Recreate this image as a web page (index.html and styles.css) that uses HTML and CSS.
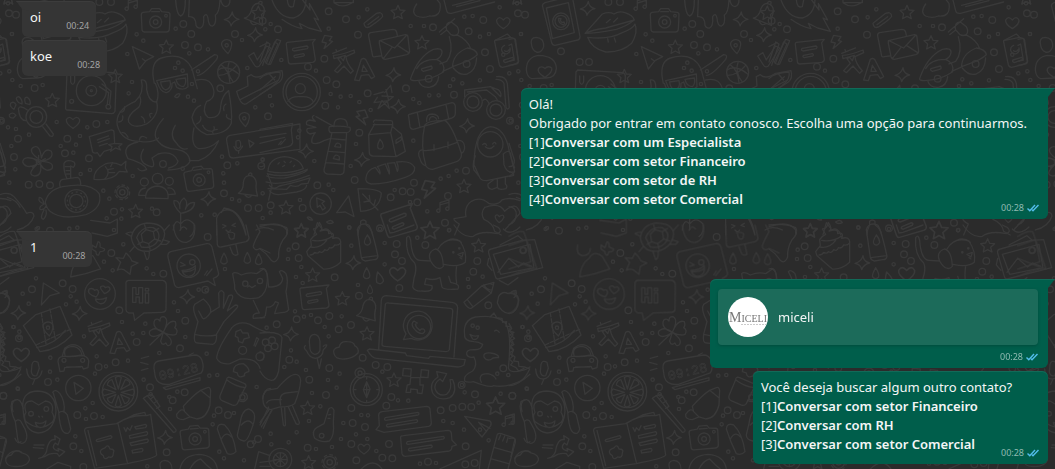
FILE: index.html
```html
<!DOCTYPE html>
<html lang="pt-BR">
<head>
<meta charset="utf-8">
<title>Conversa</title>
<link rel="stylesheet" href="styles.css">
</head>
<body>
<svg class="wallpaper" aria-hidden="true">
  <defs>
    <marker id="ring-s" viewBox="-8 -8 16 16" markerWidth="16" markerHeight="16" markerUnits="userSpaceOnUse"><circle class="ring" r="5"/></marker>
    <marker id="ring-m" viewBox="-14 -14 28 28" markerWidth="28" markerHeight="28" markerUnits="userSpaceOnUse"><circle class="ring" r="10"/></marker>
    <path id="star" d="M0-20L6-6L21-5L9 6L13 20L0 13L-13 20L-10 5L-21-5L-6-7Z"/>
    <path id="spark" d="M2-22Q4-4 22 0Q4 4-2 20Q-4 4-22 1Q-3-3 2-22Z"/>
    <path id="heart" d="M0 18Q-22 4-20-8Q-12-22 0-8Q12-22 20-8Q22 4 0 18Z"/>
    <path id="pin" d="M4 23Q-18 2-15-9Q-10-20 2-19Q17-16 15-3Q13 12 4 23ZM5-2a5 5 0 1 1-10 0a5 5 0 1 1 10 0"/>
    <path id="drop" d="M0-18Q-12 4-9 10Q0 20 9 10Q12 2 0-18Z"/>
    <path id="bolt" d="M-8-20L14-16L6-4L16-2L-10 20L-3 3L-16 0Z"/>
    <path id="note" d="M-12 14V-10L15-18V8M-12-3L15-11M-12 14a5 5 0 1 1-2-4M15 8a5 5 0 1 1-2-4"/>
    <g id="camera"><path d="M-38-25L-18-27L-12-36H12L18-27L38-25Q44-24 43-16L41 26Q40 34 32 34H-34Q-41 33-41 26L-43-16Q-44-24-38-25Z"/><circle r="18" cy="4"/><circle r="7" cy="4"/><circle r="4" cx="31" cy="-15"/><path d="M-12-27H12"/></g>
    <path id="bell" d="M-28 20Q-12 10-13-12Q-10-34 6-33Q24-32 26-10Q23 8 30 28ZM-8 25Q2 38 12 27M2-33Q4-44 12-40L13-32"/>
    <g id="letters"><path d="M-42-22L0-38M-30-26L-32-34M-40-16Q-18-16 22-32L24-24L-2-12Q0 10 20 30L12 38L-8 16L-28 36L-36 30L-16 8L-26-6L-18-10L-10 0L-4-16L-38-6Z"/><path d="M24 58L44-4Q52-10 58-2L84 48L74 54L66 42L44 44L38 60ZM50 14L46 32H62Z"/></g>
    <g id="letter-sheet"><path d="M-40-25L44-34L36-24L44 26Q44 34 36 35L-30 40Q-36 40-37 32L-43-18Q-44-24-40-25ZM-22-7L18-14Q25-12 20-6L-20 1Q-28-2-22-7ZM-18 14L8 9Q14 12 9 16L-16 21Q-24 18-18 14Z"/></g>
    <g id="tile">
      <g transform="scale(.3333)">
        <use href="#star" x="25" y="-8"/><use href="#star" x="499" y="140"/><use href="#star" x="346" y="228"/><use href="#star" x="157" y="300"/><use href="#star" x="407" y="633"/>
        <use href="#spark" x="695" y="58"/><use href="#spark" x="765" y="105"/><use href="#spark" x="625" y="597"/><use href="#spark" x="236" y="26"/>
        <use href="#note" x="397" y="12"/><use href="#heart" x="219" y="367"/><use href="#pin" x="680" y="138"/><use href="#pin" x="733" y="357"/>
        <use href="#camera" x="467" y="62"/><use href="#camera" transform="translate(597 536) rotate(-8)"/>
        <use href="#bell" transform="translate(765 42) rotate(14)"/><use href="#bell" x="743" y="560"/>
        <path d="M101 20Q98 12 108 8L170-8M190-10L213 110Q213 118 206 120L138 136Q130 136 128 128L101 20M112 24L178 8L196 98L130 116Z"/><circle cx="156" cy="64" r="25"/><circle cx="156" cy="64" r="18"/><path d="M149 55q-2 14 14 20q6-4 2-9l-6 2l-5-6l2-6Z"/>
        <path d="M228 100Q262 62 280 42Q300 34 315 42Q330 32 348 38Q372 46 376 60Q350 80 322 88Q262 100 228 100ZM228 100Q250 90 290 84L376 60M236 112Q300 120 340 98Q372 86 378 72Q388 96 368 130Q338 158 290 156Q248 146 236 112ZM292 68L304 58M314 66L326 54M296 116L298 126M316 114L320 126"/>
        <path d="M527 0Q530 45 542 48Q556 44 556 0M568 0L566 50Q588 48 588 76Q592 86 602 84Q613 80 611 50Q620 36 624 54Q626 80 638 78Q650 72 646 45Q658 40 660 0M663 0Q665 18 678 20Q690 16 690 0"/>
        <path d="M397 140L461 170L438 182L418 207ZM427 176L437 184"/>
        <path d="M52 210Q52 172 88 166Q142 168 142 206Q140 234 112 234L68 236Q54 232 52 210ZM108 232Q78 214 92 202Q102 198 108 206Q116 196 128 204Q132 216 108 232ZM68 136Q62 112 82 112Q106 114 104 140Q98 160 82 156Q70 150 68 136Z"/>
        <path d="M206 210L342 218Q350 222 349 230L345 334Q342 341 335 341L203 330Q196 330 197 322L201 216ZM212 228V244M224 228V244M212 246Q218 260 224 246M298 260L326 278L322 312M306 252L333 274L329 312"/><circle cx="274" cy="272" r="45"/><circle cx="274" cy="272" r="16"/><circle cx="274" cy="272" r="3"/><circle cx="325" cy="320" r="7"/><circle cx="215" cy="304" r="6"/>
        <circle cx="109" cy="351" r="31"/><circle cx="109" cy="351" r="19"/><path d="M128 380L150 408Q160 412 160 402L138 372M82 330Q60 314 55 326Q58 362 78 362M42 328Q28 320 32 310Q42 302 48 314ZM56 308Q42 292 56 290Q68 298 66 312ZM76 310Q70 290 82 292Q94 302 90 314ZM40 354Q26 354 28 344Q38 334 48 346Z"/>
        <path d="M463 250Q448 186 484 174Q550 154 576 206L592 266M470 242L562 222L564 260Q550 274 530 262L524 246L516 250Q518 270 500 278Q482 280 470 242ZM482 246L510 242Q516 264 498 270Q484 266 482 246ZM528 238L556 234Q560 252 550 260Q532 258 528 238Z"/>
        <path d="M424 240Q442 236 440 268Q446 306 470 306Q480 280 466 250M424 240Q434 278 406 304Q344 330 352 376Q364 424 420 424Q456 430 476 414M470 306Q480 344 440 372Q400 388 386 366Q380 346 416 322Q426 306 420 290M490 356Q450 402 476 426Q492 446 530 448Q568 454 570 484Q560 508 504 510M414 426Q362 436 384 476Q430 488 440 508Q422 518 414 506M430 448Q410 484 446 498Q470 508 456 474L474 462Q520 450 534 484Q530 498 506 504M574 210L644 164Q658 164 650 178Q610 226 592 226M590 240Q636 230 642 276Q642 298 620 304Q604 336 624 352Q662 358 662 318Q666 286 686 272Q698 336 694 370Q680 404 620 404Q580 386 576 352Q584 322 602 316M582 384Q570 436 596 446Q630 448 656 422Q636 468 596 482L568 482M608 376Q614 394 636 394Q646 390 642 380M526 376Q506 408 530 430Q544 452 562 446M524 290Q532 278 540 282Q534 298 524 290"/>
        <path d="M360 336Q374 338 374 320M356 366Q372 364 368 348M384 412Q376 396 366 398M418 420Q422 402 440 414M434 368Q434 354 424 350M452 352Q444 340 456 340M590 372Q606 364 602 350M640 402Q632 390 652 388M678 312Q668 318 672 332M692 358Q676 354 680 344"/>
        <circle cx="686" cy="217" r="33"/><path d="M663 194Q688 210 690 249M655 226Q686 226 710 196M688 184Q676 216 700 246M654 210Q680 192 716 222"/>
        <path d="M746 168L762 158L772 180L800 138L812 144L778 198Q770 204 764 196ZM710 274L744 258L742 230L754 224Q770 240 800 220L846 212Q852 236 838 246L738 312Q722 318 710 274ZM722 298L836 240"/><path d="M780 140L804 128M800 188L824 126L834 132L806 194"/>
        <path d="M680 422Q678 410 690 406L900 372V448L700 474Q690 474 688 466ZM708 424Q720 416 722 430L722 440Q714 450 708 440ZM702 440Q714 466 728 438M716 452V460M746 420L762 430L750 442Z"/>
        <path d="M268 410L334 390Q342 390 342 396L344 430L366 432L356 440L362 450L346 444L332 454L336 440L326 434L344 430M268 410L278 456Q284 462 292 458L300 470L312 454L332 448M292 420L326 408M294 428L328 416M298 438L322 430"/>
        <circle cx="116" cy="486" r="7"/><path d="M112 474Q84 452 100 442Q120 432 124 474Q136 440 154 454Q164 476 126 484Q164 486 156 506Q138 520 122 494Q126 528 104 528Q78 524 110 494Q76 508 68 486Q70 464 112 480M116 486V466M116 486L136 476M116 486L130 506M116 486L98 502M116 486L96 474"/>
        <path d="M282 538Q280 510 316 492Q338 484 364 496L378 484L376 504L382 516L358 514Q338 544 282 538ZM316 500Q334 518 314 538M338 488L332 500M326 508L340 506M328 518L344 518"/>
        <path d="M192 490Q200 476 222 486Q228 494 220 502L212 498V532M192 490Q190 512 200 534M196 500H210M198 512H212M200 522H212M180 560Q176 542 188 538L232 532Q242 534 242 554M136 606Q144 570 188 560Q272 544 298 582Q308 624 258 644Q184 662 150 634Q138 622 136 606ZM136 612Q112 608 118 592Q128 592 132 612Q116 620 120 628Q132 632 138 618M132 630Q118 656 130 658Q142 648 138 630"/><circle cx="229" cy="603" r="34"/><circle cx="229" cy="603" r="20"/><circle cx="229" cy="603" r="27" stroke-dasharray="3 11"/>
        <circle cx="367" cy="577" r="17"/><circle cx="367" cy="577" r="8"/><circle cx="367" cy="577" r="22" stroke-dasharray="8 9"/>
        <circle cx="473" cy="536" r="16"/><circle cx="433" cy="546" r="12"/><circle cx="508" cy="544" r="12"/><path d="M437 594Q436 562 472 558Q508 562 504 596ZM434 586H416Q418 566 436 564M506 584L526 582Q522 562 504 564"/>
        <path d="M0 584Q26 574 42 590Q70 622 80 640Q100 632 102 648Q92 680 52 690M0 620Q22 622 22 644Q20 668 0 674M22 592Q50 600 60 622M0 430L16 480Q18 500 0 500M0 514Q16 520 14 526L0 530M0 118Q20 112 20 122L28 184Q26 192 0 196M0 136L8 132L16 180L0 184"/>
        <path d="M542 640Q518 616 522 602Q540 600 540 626Q536 606 552 594Q566 606 556 628Q566 604 584 608Q582 634 542 640ZM542 640V690M542 672Q524 652 520 690M544 670Q560 648 582 672Q586 700 570 710"/>
        <path d="M650 705V654Q656 636 676 630Q714 622 738 705M664 638L672 624Q726 630 738 705M668 674L678 678L668 684M706 670L696 676L706 680M678 690Q686 700 692 690M768 690Q790 676 820 690M802 520L816 556L806 600"/>
        <polyline class="small" points="36,102 24,10 430,122 382,162 410,103 527,86 535,188 525,204 568,160 624,148 548,212 576,252 564,290 582,302 594,214 396,246 386,280 128,255 62,258 28,214 37,240 24,382 48,387 87,404 34,438 46,508 28,548 182,438 220,458 228,434 240,408 262,382 322,366 170,366 242,522 270,510 310,572 328,596 366,628 364,656 456,626 398,528 548,506 604,646 644,644 696,597 672,548 670,520 666,470 712,490 742,204 726,120 766,322 718,602 788,478 788,580 114,684 208,686 320,655 342,690 5,362"/>
        <polyline class="medium" points="298,6 333,6 550,72 574,102 705,102 555,135 594,142 661,265 104,264 54,416 202,416 289,372 42,471 195,460 267,475 86,554 118,552 150,556 342,635 470,637 489,492 672,580 682,496 744,624 776,624 212,186 156,154 48,44 240,186 788,62 150,692"/>
      </g>
      <g transform="translate(260 0) scale(.3333)">
        <path d="M36 0Q56 54 100 54Q136 44 138 0M82 0Q84 26 100 20L104 0M128 0L150 30L148 10L176 60L162 54L184 94L146 84L118 70L126 86Q96 80 66 58M222 8Q248 28 280 6M222 0V8H280V0M470 12Q452 38 470 48Q490 56 508 48Q546 52 540 10L532 0M552 0L560 32Q562 42 574 40L704 6M578 16L664-6M590 20L660 2"/>
        <use href="#star" x="414" y="36"/><use href="#star" x="486" y="127"/><use href="#star" x="612" y="558"/><use href="#star" x="78" y="622"/><use href="#star" x="124" y="690"/><use href="#star" transform="translate(510 690) scale(1.3)"/><use href="#star" x="772" y="-8"/><use href="#star" x="-5" y="38"/>
        <use href="#spark" x="400" y="225"/><use href="#spark" x="414" y="320"/><use href="#spark" x="621" y="378"/><use href="#spark" x="306" y="479"/><use href="#spark" x="138" y="454"/>
        <use href="#heart" x="730" y="68"/><use href="#bolt" x="202" y="126"/><use href="#bolt" transform="translate(506 568) scale(1.3)"/><use href="#bolt" transform="translate(306 352) scale(-1.1 1.1)"/><use href="#note" x="552" y="618"/>
        <use href="#letters" transform="translate(260 182)"/><use href="#letter-sheet" x="122" y="152"/><use href="#letter-sheet" transform="translate(416 660) rotate(-12) scale(1.15)"/>
        <path d="M312 70L350 40Q366 34 368 48Q368 54 330 80Q314 88 312 70M324 74L356 50"/>
        <path d="M326 108Q324 100 332 98L398 88Q408 88 410 96L412 106M326 108L338 168Q340 172 346 170L362 168M358 122L436 104Q444 104 444 112L449 154Q448 162 440 164L376 178Q368 178 366 170L358 130ZM360 122L404 144L440 106M370 176L396 142M446 158L412 136"/>
        <path d="M538 96L584 56M542 104L560 90M560 90Q554 68 574 66L592 80Q600 94 592 104Q576 112 566 96ZM568 110Q582 156 560 184L540 192M590 104Q624 120 632 146M452 236Q474 170 520 148Q548 142 546 158Q544 172 530 178Q558 190 550 216Q516 240 466 242Q450 242 452 236ZM470 206Q484 178 530 178M486 206L514 198Q520 206 512 208L490 214Q482 210 486 206M578 200Q578 162 622 144Q650 148 652 164Q638 178 604 190ZM548 214L580 200"/><path d="M476 242Q482 264 508 262Q534 258 536 230M580 204Q598 228 622 222Q648 212 650 174"/><circle cx="620" cy="192" r="10"/><circle cx="506" cy="236" r="10"/>
        <path d="M704 122L742 102L752 112L764 116L776 184Q774 192 768 192L728 202Q720 202 718 194L704 126ZM704 122L752 112M734 136A13 13 0 1 0 750 144M734 152Q742 158 748 148M732 180L758 172Q764 176 758 180L736 188Q728 184 732 180"/>
        <path d="M0 186L20 126L30 132L8 196M16 186L50 118L62 122L32 192Q20 196 16 186M0 236Q16 218 60 216Q66 236 38 258L0 284M0 270L46 230M28 222L44 240"/>
        <circle cx="125" cy="276" r="56"/><circle cx="125" cy="276" r="47"/><circle cx="121" cy="266" r="15"/><path d="M84 304Q92 288 122 290Q154 288 160 306"/>
        <path d="M374 278L392 256L396 278M378 268L386 302L342 308L352 292M366 288L400 290L354 326L366 302L388 326L382 304M370 276L342 284"/>
        <path d="M614 270L692 260L722 290Q726 280 716 270L690 260M614 270V290M622 276L680 270L706 290L712 300M710 230Q736 226 742 250L748 322Q744 332 738 322L732 250Q726 238 708 238M668 302Q678 290 688 312"/><circle cx="639" cy="306" r="28"/><circle cx="639" cy="306" r="18"/><circle cx="708" cy="330" r="28"/><circle cx="708" cy="330" r="18"/>
        <path d="M0 388L98 370L94 390L98 428Q94 438 84 440L0 458M0 412L78 400M0 430L74 412M56 434L64 424M62 434L76 418"/>
        <path d="M168 350L222 380M162 346Q150 350 166 364L150 360Q136 362 140 374L168 382L142 386Q136 396 150 402L166 398Q152 416 156 428Q168 436 192 422L210 416M222 376Q222 356 242 356Q262 356 262 376M208 380Q204 394 212 398H260Q274 396 270 382Q236 376 208 380M216 398L192 510Q192 520 202 522L242 524Q252 522 252 514L260 398M214 416L258 420M206 454L256 458M198 488L252 492M224 440Q230 422 242 434V442ZM220 476Q226 458 238 470V480Z"/>
        <path d="M340 366Q342 358 350 360L390 362Q398 360 398 370V380L424 402L436 454L408 470L338 468Q328 466 328 458L326 404L344 372M326 404L392 398L398 374L340 374M392 398L408 470M408 420L424 410V420L408 430ZM360 418Q348 440 356 446Q368 450 370 438Q368 426 360 418"/>
        <path d="M446 350Q442 344 452 342L576 308Q584 308 586 318V340Q586 350 576 354L460 388Q452 388 450 380ZM472 338L480 382M558 314L566 356M500 364Q498 342 516 342Q536 344 536 356M508 360Q510 348 520 350Q528 352 530 358M494 376Q504 360 556 362Q578 378 604 460Q606 476 592 484L518 508Q504 508 498 498Q480 440 494 376M484 450Q510 458 590 428M522 434V452M564 426V444M484 450Q470 456 480 476Q484 494 498 498M590 422Q612 418 614 440Q614 456 604 460"/>
        <path d="M0 500Q12 500 12 494M24 514Q26 474 74 470Q120 474 130 506Q80 526 24 514ZM24 522Q80 536 142 508Q142 520 74 534Q36 536 20 528M18 546Q60 560 148 526M28 556Q40 572 58 558Q90 552 150 534L144 550L124 552Q110 564 92 556L80 568L24 566M28 572Q38 584 56 584L110 576Q138 570 140 556M54 492L58 488M72 484L76 488M90 488L94 484M68 500L74 496M100 500L104 496"/>
        <path d="M318 534Q320 510 346 502L360 522Q362 512 352 500L376 492L388 522Q390 510 382 490L404 488L412 514Q418 504 410 486Q452 480 464 502Q466 522 436 532Q380 552 334 552Q314 548 318 534Z"/>
        <circle cx="691" cy="433" r="38"/><path d="M642 494Q644 386 692 380Q736 384 748 454L764 514Q760 524 748 528L680 542Q664 542 660 534L642 494ZM646 468Q636 492 642 510L658 530M730 462Q752 442 754 474L764 504M730 462L732 494Q740 520 760 516M668 434Q676 426 680 436M698 432Q704 422 708 432M676 440Q690 452 702 438M700 540L684 552Q682 566 696 568L712 562V538M712 562Q716 572 738 566Q744 558 736 552V534"/>
        <circle cx="182" cy="611" r="32"/><path d="M170 594L194 604L186 610L196 624L188 630L180 616L172 622ZM230 638L266 588L282 650L256 636Z"/>
        <path d="M294 566Q356 566 364 580Q360 632 302 634Q298 600 294 566ZM308 582L354 630M330 602L328 586M330 602L312 606M342 616L346 600"/>
        <path d="M584 705L598 672Q580 662 582 656L618 650Q612 620 634 604Q662 588 686 610Q714 618 726 600Q750 590 780 602M674 622Q660 640 672 658Q700 670 704 694L724 705M674 622Q720 606 734 634Q770 600 780 640L736 688M706 648Q712 640 718 650Q730 640 732 652Q726 664 718 668Q704 656 706 648M0 680Q60 660 80 690V705M294 705Q294 690 302 674V664Q310 656 318 664V674Q336 688 338 705M162 705L172 668L188 690Q206 680 216 705M142 652Q150 648 158 660Q146 662 142 652M200 666Q214 656 220 668Q206 674 200 666"/>
        <polyline class="small" points="322,28 296,52 206,86 32,72 16,88 452,78 492,78 613,50 638,48 719,22 687,102 660,110 783,102 64,180 168,212 212,282 242,290 234,322 272,288 298,306 332,330 36,316 118,392 114,412 163,483 272,498 288,432 460,422 460,297 478,309 508,286 536,286 580,238 570,258 607,250 660,241 748,220 730,164 542,536 566,528 590,512 404,570 450,606 502,634 120,600 32,638 206,554 220,570 8,480 8,654 268,682 568,690 30,288"/>
        <polyline class="medium" points="206,34 258,58 54,88 294,104 519,82 626,94 670,60 193,176 144,200 200,240 229,253 323,280 438,265 196,317 24,349 298,398 582,284 690,207 675,157 774,40 750,362 172,556 284,540 428,574 452,576 462,548 392,592 472,607 128,624 618,512 564,588 360,685 555,668 32,616 4,498"/>
      </g>
      <g transform="translate(0 225) scale(.3333)">
        <path d="M272-14L330-6L352-18V24L322 34L276 24M0 34Q26 16 44 20L84 132Q60 128 0 154M0 62L52 44L66 110L0 132M0 100L64 126M0 204Q20 206 28 222Q30 246 8 262L0 264M8 204Q14 194 20 202L14 208"/><circle cx="42" cy="76" r="9"/>
        <path d="M394 38Q400 0 440-6Q490-6 494 26Q490 66 448 78Q402 84 394 38ZM410 38Q424 2 460 8Q484 22 474 46Q460 72 424 66ZM424 28L438 14L460 20L464 42L446 56L428 50ZM438 14L434 0M460 20L476 10M464 42L482 48M446 56L450 72M428 50L414 58M394 34L378 26Q388 20 396 22M492 18L508 0M488 44L508 50L500 58L482 58M432 80L440 104Q448 104 448 80M402 66L390 80"/>
        <path d="M520 0Q526 56 560 52Q588 44 584 0M540 16Q548-2 560 12M650 0L652 58Q654 68 664 66L738 50Q750 44 746 34L738 0M690 66L698 86Q704 94 714 88L708 60M682 24Q694 18 704 26M686 28Q688 48 702 40L704 28M770 0L780 20Q758 60 760 66Q766 80 780 70L810 84"/>
        <path d="M504 96Q502 84 512 80L620 56Q632 54 636 66L656 146Q656 154 640 160L646 182L624 168L536 188Q528 188 524 180ZM614 150L622 138M620 152L636 132"/><circle cx="566" cy="122" r="35"/><circle cx="577" cy="112" r="8"/><path d="M542 112L556 120L542 124M546 136Q572 136 586 122Q590 152 566 154Q550 152 546 136ZM550 140Q572 142 586 130"/>
        <path d="M276 60L288 68L294 50Q302 50 300 66L314 72Q314 80 300 80L296 90Q288 92 288 80L276 72ZM378 84Q392 96 396 108L414 114L394 124L390 148L372 134Q360 130 352 136L362 112L348 98L370 100ZM240 100Q256 74 280 94L302 132Q260 148 212 156Q216 116 240 100M206 60Q200 90 222 92Q244 90 244 70"/>
        <path d="M130 174L178 204L150 212L124 240ZM378 178Q376 168 386 166L488 166Q498 168 499 178L498 254Q496 262 486 262L432 264L404 286L400 264H386Q378 260 378 254ZM398 188H408V208H416V188H428V234H418V216H408V232H398ZM436 204H446V234H436ZM436 190H446V198H436Z"/>
        <circle cx="300" cy="207" r="46"/><path d="M288 216Q258 206 268 192Q278 188 284 196Q294 190 296 202Q294 210 288 216ZM314 206Q296 188 304 184Q312 180 316 188Q328 182 330 192Q328 200 314 206ZM286 222Q304 226 320 218Q316 238 300 236Q288 232 286 222"/>
        <use href="#spark" x="55" y="264"/><use href="#spark" x="239" y="266"/><use href="#spark" x="562" y="216"/><use href="#spark" x="495" y="638"/><use href="#drop" x="672" y="102"/><use href="#drop" x="742" y="100"/><use href="#drop" x="776" y="104"/>
        <use href="#letters" transform="translate(306 326)"/><use href="#heart" transform="translate(64 388) scale(1.2)"/><use href="#camera" transform="translate(585 638) rotate(-5)"/>
        <path d="M124 264L138 356M150 252L166 342M108 360L214 312" stroke-dasharray="12 5"/><path d="M70 302L106 270L180 244L216 330Q172 376 120 380ZM110 368Q168 356 196 316"/><use href="#pin" x="144" y="310"/>
        <path d="M490 322Q454 308 464 286Q472 278 480 288Q480 272 494 276Q508 286 490 322Q506 282 526 290Q530 302 524 308Q536 316 528 328Q514 334 490 322Q524 346 510 360Q502 366 498 354Q486 364 482 348L490 322Q462 342 450 330Q444 318 456 314Q468 306 490 322L450 360"/>
        <path d="M584 328L594 290Q574 250 584 238L610 222Q636 244 632 262Q616 286 608 280L596 258M632 262L658 246L656 204Q664 190 672 204L670 250L686 212Q700 206 698 218L682 258L706 240Q718 240 710 250L672 290L648 330M584 328Q580 354 592 354L638 358Q650 356 650 330Q616 336 584 328"/>
        <path d="M704 180L698 146Q704 138 724 150Q748 140 770 146L790 132Q804 136 802 168Q800 206 776 218Q720 230 704 192ZM760 226L778 264Q756 264 760 280L794 278M742 186L748 182L756 188L766 182"/><circle cx="736" cy="176" r="8"/><circle cx="780" cy="168" r="8"/>
        <path d="M650 400Q652 370 696 308Q716 286 750 298Q790 322 810 322M650 400Q660 420 690 416L720 402Q770 398 780 430M708 320L722 314L728 324H744L748 338L732 342L728 354L716 350L714 338L706 334ZM762 362L770 338L776 342L766 364M700 440Q700 416 730 416Q750 430 746 440Q730 444 734 452Q714 462 712 444Z"/><circle cx="728" cy="376" r="12"/><circle cx="780" cy="395" r="12"/>
        <path d="M186 396L194 370Q220 348 244 370L254 394M196 394Q186 366 220 364Q242 368 246 390Q220 396 196 394M174 410Q174 394 190 394L250 392Q268 398 266 412L264 428L250 432L246 424L194 428L192 438L180 440ZM200 426H242"/><circle cx="192" cy="406" r="6"/><circle cx="248" cy="406" r="6"/>
        <path d="M96 418Q100 404 114 412L118 430L110 452Q96 456 94 440ZM80 432Q82 464 104 462Q122 460 126 438M104 464L98 478M0 296L8 310L2 318L12 330L4 340L12 352L4 364L14 374L8 388L18 396L14 408L28 410L30 424L46 426L62 432Q40 480 0 482"/>
        <circle cx="235" cy="489" r="38"/><path d="M222 472L250 490L228 508Z"/><circle cx="355" cy="500" r="58"/><circle cx="355" cy="500" r="48"/><path d="M355 492L346 458Q356 450 364 458ZM362 494L376 464Q390 466 390 478ZM364 502L400 492Q408 502 398 512ZM362 508L388 520Q386 534 374 536ZM355 512L364 540Q356 550 346 542ZM348 508L336 534Q324 532 322 520ZM346 502L312 512Q302 502 312 492ZM348 494L322 480Q324 466 336 464Z"/>
        <path d="M462 430Q460 412 476 408L584 390Q600 390 606 406Q614 430 604 444L508 478Q474 482 466 456ZM490 488L600 458V466L498 494ZM424 400L446 394M422 412L444 418M424 436L444 430M568 390L580 384"/><text class="digits" transform="translate(480 466) rotate(-13)">09:28</text>
        <path d="M430 520L442 512L528 614Q530 622 520 622ZM442 512L456 508L480 544L470 550M452 522L462 514M462 534L472 528M530 568Q546 546 554 560L550 544Q580 510 602 496L622 488Q630 484 632 496L630 540Q620 580 590 582L570 576L550 584Q528 584 530 568ZM602 496L630 518M554 560L570 576M680 464Q680 454 692 458L734 476Q742 482 734 490L712 536Q706 544 696 540L668 528Q658 524 660 512ZM680 464Q704 484 736 488M726 504Q744 502 742 520Q732 536 716 526"/><circle cx="727" cy="517" r="8"/>
        <path d="M70 560Q60 500 112 498Q168 500 168 560Q162 622 114 624Q74 620 70 560ZM78 562Q66 528 96 528L116 540L136 528Q164 532 156 562Q168 580 156 592Q120 624 76 588Q70 572 78 562M106 592Q124 600 138 588Q136 608 120 608Q108 604 106 592M116 574L118 576M126 574L128 576M46 590Q28 552 36 530Q56 516 64 534L70 550M46 590L54 648Q62 660 74 652Q86 640 76 614L62 588Q52 580 46 590M158 502Q166 490 180 506Q196 530 192 560M160 504L176 560Q180 614 192 622Q208 632 212 612L202 570Q190 552 176 564"/><circle cx="93" cy="566" r="7"/><circle cx="139" cy="552" r="7"/>
        <path d="M254 618Q252 610 262 608L350 596Q392 568 440 572L452 568L470 690Q468 700 382 716L284 730L254 618ZM264 616L290 722M354 596L382 712M350 596L400 570L434 562L438 572M290 644L332 632Q340 636 332 640L294 650Q286 648 290 644M372 608L378 620L382 608L390 616L396 602M404 606L436 598Q444 602 436 608L408 612ZM388 632L440 620Q446 624 440 630L390 640ZM390 654L442 642Q448 646 442 652L394 662ZM396 676L426 670Q432 674 426 680L398 684ZM316 668Q324 656 330 672Q346 672 340 684Q340 700 326 696Q312 708 310 692Q296 684 304 674Z"/>
        <path d="M116 700Q140 696 142 666Q150 640 166 644L164 632L180 642L174 660L166 654Q150 672 176 678L174 670L194 680L178 694L172 686Q150 682 136 694ZM102 660H132M100 668L130 670M18 710Q14 694 34 690Q46 668 66 684Q90 690 88 706Q80 728 40 724Q22 724 18 710ZM0 572L12 568V596L0 598M0 640Q24 636 16 650L6 694M140 732L174 712L212 724V732M540 732Q548 690 598 688Q646 692 652 732M570 732Q584 706 602 702Q618 720 634 732"/>
        <path d="M652 612Q654 592 674 600Q700 624 708 680Q698 692 682 686Q664 650 652 612ZM664 642Q680 616 694 636M720 596Q726 554 746 552Q770 560 762 590Q744 650 732 648Q712 644 712 630ZM724 600Q746 576 760 600M780 600L806 546M790 610L812 560M788 520Q792 490 812 490M764 732L776 680L810 692M482 732Q474 708 494 706Q516 708 516 732"/>
        <polyline class="small" points="370,58 338,136 312,110 440,130 460,147 675,132 108,160 68,206 86,236 198,238 212,214 230,230 366,291 436,296 398,326 430,324 252,334 290,394 285,446 318,424 384,407 151,398 172,464 150,440 40,306 58,320 58,338 478,384 522,232 534,258 596,194 620,196 556,336 431,464 452,508 532,500 510,552 508,516 628,452 652,450 620,386 770,486 762,652 732,706 672,700 658,680 638,598 642,572 226,634 244,678 256,550 278,534 258,582 308,576 54,492 702,564 110,12 232,8 442,724 800,308"/>
        <polyline class="medium" points="96,193 188,175 218,192 358,256 556,287 410,351 540,370 347,412 296,426 144,471 450,487 554,502 10,512 282,573 232,570 220,664 500,682 490,146 334,84 623,36 684,570 656,556 774,642 752,658 518,526 250,726 616,194"/>
      </g>
      <g transform="translate(260 225) scale(.3333)">
        <path d="M0 0Q44-6 80 8Q90 24 68 46Q54 70 56 96Q44 124 28 98Q18 84 0 72M0 132Q18 124 22 150L26 186Q66 186 68 160L58 140Q66 132 78 146Q86 164 78 200L86 254Q80 264 70 262L44 266Q50 244 56 234L46 230Q38 248 20 246L16 272Q10 280 0 278"/>
        <path d="M144 92L140 80L154 62L152 44Q160 32 170 28L160 12Q174 12 178-8Q192 12 180 18Q210 10 206 26Q226 20 218 40Q240 34 242 50L242 112Q218 134 190 132ZM152 66Q180 72 200 46M158 46Q190 52 216 34M150 90Q160 90 164 82Q174 88 178 80Q188 86 194 74Q204 80 208 68Q218 72 224 60Q236 62 242 54"/>
        <path d="M292 14Q300-10 326 0Q336 12 354 94Q352 104 342 104L316 108Q306 106 304 98ZM306 98L352 92M322 30Q308 52 316 58Q326 64 332 52Q332 42 322 30M382 0L390 24L402 22L462 0M582 0Q608 40 640 34Q662 16 712 26Q728 20 716 8L700 0M730 12Q750 34 780 6"/>
        <use href="#star" x="124" y="17"/><use href="#star" x="656" y="61"/><use href="#star" x="158" y="149"/><use href="#star" x="247" y="220"/><use href="#star" x="321" y="325"/><use href="#star" x="402" y="464"/><use href="#star" x="143" y="548"/><use href="#star" x="146" y="712"/><use href="#star" transform="translate(707 542) scale(1.3)"/>
        <use href="#spark" x="280" y="114"/><use href="#spark" x="93" y="328"/><use href="#drop" x="320" y="146"/><use href="#drop" transform="translate(358 160) rotate(-15) scale(1.1)"/><use href="#drop" transform="translate(330 194) scale(.8)"/>
        <use href="#heart" transform="translate(413 146) scale(1.2)"/><use href="#heart" transform="translate(312 671) scale(.9)"/><use href="#note" x="748" y="585"/><use href="#letter-sheet" x="163" y="214"/><use href="#bell" transform="translate(320 256) rotate(8)"/>
        <path d="M440 38Q448 26 452 46Q456 104 480 106L512 108M440 38Q436 90 464 114Q472 130 462 160L458 186Q464 200 486 198Q522 202 516 182L494 178L498 160Q520 168 540 158L546 186Q552 196 594 192Q600 180 586 176L572 172L566 154M590 122Q586 152 590 174M512 108Q500 82 526 72Q548 76 550 124Q538 138 522 122Q516 116 512 108M534 72Q556 34 600 48Q622 82 616 112Q598 128 552 118M564 46Q584 36 604 52M594 88L610 82L606 96ZM600 98L606 102"/><circle cx="580" cy="82" r="2"/><circle cx="598" cy="70" r="2"/>
        <path d="M686 84Q684 74 694 72L786 46L824 44L848 128L714 162Q708 162 706 154ZM700 88L810 58L822 128L722 148ZM714 142L746 100L776 126L790 114L816 124M720 60L774 32L790 46M718 166L744 180L774 158M686 100L682 120L696 136"/><circle cx="790" cy="76" r="9"/>
        <path d="M612 232L666 182L702 172L694 204L634 250Q624 252 612 232ZM666 182L694 204M672 178Q676 192 696 196M624 226L638 244M690 176L700 180M716 214Q728 196 744 206Q774 200 776 226Q774 262 748 266Q724 264 712 234ZM750 206Q756 196 768 196Q772 210 762 218"/>
        <path d="M356 374L364 226Q366 212 380 212L576 232Q592 234 593 248L582 396M366 358L376 238Q378 232 386 234L572 250Q580 252 578 262L568 374Q566 380 558 380L374 364Q366 364 366 358M322 376L328 372L436 384L440 392L506 400L510 394L616 404L612 420Q604 426 594 426L350 400Q336 400 322 376Z"/><path d="M438 326A43 43 0 1 1 454 340L430 344Z"/><circle cx="477" cy="306" r="35"/><path d="M462 288Q452 296 460 308Q472 326 488 326Q500 318 490 312L484 312L480 316Q468 308 466 298L472 294Z"/>
        <path d="M614 330Q608 286 646 276Q706 268 734 292Q756 316 746 420Q742 438 760 440Q790 440 810 426M614 330Q612 348 642 350Q656 350 668 358Q664 376 640 374Q618 374 620 388Q624 400 642 396Q654 420 638 438Q608 452 614 468Q622 474 640 470M640 470Q690 490 700 482Q742 490 790 464L810 448M664 472Q652 446 684 446Q702 450 708 462M672 396Q668 382 692 384Q718 388 716 398Q700 396 692 404Q678 408 672 396M630 328Q640 336 656 332Q650 348 638 342ZM704 318Q710 312 718 322M690 276L702 264L710 278L726 280L728 292L740 290L738 304L752 304L748 318L762 322L750 330L764 340L750 348L762 358L750 366L760 376L748 384L758 394L748 402L758 412L752 420L768 428L776 438L792 430"/>
        <path d="M148 350Q148 328 164 328Q178 330 180 350V376Q176 388 164 388Q152 384 150 372ZM136 362Q128 368 140 378Q148 398 166 400Q188 398 190 374Q200 366 200 360Q194 358 190 364M172 402L178 430L184 402M222 386Q216 370 238 366Q240 348 262 350Q282 350 284 362Q298 370 294 384Q280 400 254 402Q226 404 222 386ZM0 324Q60 318 66 338L56 438Q48 468 34 466Q14 464 0 438M0 380Q14 384 12 394Q10 406 0 406"/>
        <circle cx="319" cy="494" r="48"/><circle cx="319" cy="494" r="39"/><circle cx="300" cy="444" r="15"/><circle cx="300" cy="444" r="6"/><path d="M320 470L330 492L320 518L310 494ZM310 494H330M320 470V518M320 455V462M320 532V526M358 494H350M280 494H288"/>
        <path d="M430 430L454 432L452 454L428 452ZM484 434L506 436L504 458L482 456ZM452 458L480 458V480H490L486 506L472 504V494L452 492V502L438 502L442 480L450 478ZM530 440L560 446L548 470L540 462Q520 476 526 494Q536 516 560 508Q578 492 570 464L578 464Q594 500 570 518Q534 530 518 504Q506 474 534 456Z"/>
        <path d="M10 534Q4 512 20 496L52 490Q88 448 106 448Q120 448 122 466Q120 498 104 536Q94 546 60 546L32 554Q14 550 10 534ZM20 534Q24 522 52 524L64 524M62 540Q54 508 78 504L112 500M26 556L0 592M36 556L4 606M64 550L70 600Q78 608 76 592L74 548M84 544L108 596Q118 602 118 592L98 544"/>
        <path d="M206 552Q216 542 222 556L220 592Q224 634 208 648Q182 654 164 640Q154 618 170 608L192 596ZM206 570L212 568M204 580L210 580"/><circle cx="185" cy="632" r="7"/>
        <path d="M356 570Q356 562 366 560L500 544Q508 544 510 552L514 594Q514 602 506 604L372 622L348 614L358 602ZM376 578L474 562Q480 566 474 570L378 586Q370 584 376 578ZM382 598L470 584Q476 588 470 592L384 606Q376 604 382 598M422 640Q420 632 430 632L564 616Q572 616 574 624L576 646L590 660L576 664Q576 676 568 678L436 694Q428 694 426 686ZM442 650L550 634Q556 638 550 642L444 658Q436 656 442 650M448 670L514 660Q520 664 514 668L450 678Q442 676 448 670"/>
        <path d="M614 574L690 588Q696 594 692 602L666 636ZM656 592L690 610M656 592L680 620M684 732L712 628Q718 622 730 628L760 638Q768 642 766 652L744 732M716 644L722 630M728 648L734 634M740 652L744 638M704 668L754 682M694 702L746 716M540 732L664 676L658 732M304 732Q340 696 366 732M0 712L48 706M0 724H30M764 700Q780 670 810 680M786 560Q778 530 796 524M792 640Q800 660 810 650"/><circle cx="61" cy="704" r="34"/><circle cx="61" cy="704" r="21"/><path d="M61 683V725M40 704H82M46 689L76 719M46 719L76 689"/>
        <circle cx="209" cy="712" r="18"/><circle cx="209" cy="712" r="8"/><circle cx="209" cy="712" r="23" stroke-dasharray="8 10"/>
        <polyline class="small" points="86,74 84,102 124,126 128,174 108,156 268,8 360,12 274,62 374,54 374,118 294,180 105,259 132,275 153,270 245,274 194,306 206,334 93,376 110,410 73,426 138,435 239,446 204,465 156,504 230,488 181,544 147,588 250,594 110,622 32,626 86,652 34,658 216,666 168,672 243,642 288,628 322,642 304,570 324,571 349,678 367,440 414,526 445,527 578,594 550,588 612,614 660,614 656,533 606,480 722,506 614,502 668,155 624,162 626,186 788,306 480,716 528,714 686,646 472,38 567,16 638,302 653,308 712,446 745,450 800,490"/>
        <polyline class="medium" points="116,99 107,64 224,157 297,212 410,57 405,88 426,108 418,189 496,60 640,140 652,108 685,241 50,298 110,283 174,286 208,273 236,313 273,300 148,464 198,510 88,404 208,429 308,398 347,420 382,426 394,516 379,542 278,594 315,606 274,549 274,657 387,657 143,668 542,556 578,549 607,545 634,546 645,508 757,513 617,664 605,480 367,698 397,700 289,706 504,710 616,718 644,714 730,430 804,340 17,352 36,346 24,370 44,364"/>
      </g>
    </g>
  </defs>
  <use href="#tile" x="-509"/><use href="#tile"/><use href="#tile" x="509"/><use href="#tile" x="1018"/><use href="#tile" x="1527"/>
</svg>

<main class="chat">
  <article class="bubble in tail">
    <p class="text">oi<span class="spacer"></span></p>
    <div class="meta"><time>00:24</time></div>
  </article>
  <article class="bubble in">
    <p class="text">koe<span class="spacer"></span></p>
    <div class="meta"><time>00:28</time></div>
  </article>
  <article class="bubble out tail turn">
    <p class="text">Olá!<br>Obrigado por entrar em contato conosco. Escolha uma opção para continuarmos.<br>[1]<b>Conversar com um Especialista</b><br>[2]<b>Conversar com setor Financeiro</b><br>[3]<b>Conversar com setor de RH</b><br>[4]<b>Conversar com setor Comercial</b><span class="spacer"></span></p>
    <div class="meta"><time>00:28</time><svg class="ticks" viewBox="0 0 12 8" role="img" aria-label="Lida"><path d="M0.5 4.5L2.8 6.8L8 1M5 5.8L6 6.8L11.5 1"/></svg></div>
  </article>
  <article class="bubble in tail turn">
    <p class="text">1<span class="spacer"></span></p>
    <div class="meta"><time>00:28</time></div>
  </article>
  <article class="bubble out tail turn contact">
    <button class="card" type="button">
      <svg class="avatar" viewBox="0 0 40 40" aria-hidden="true">
        <circle cx="20" cy="20" r="20" fill="#fff"/><text class="brand" x="1" y="25"><tspan class="initial">M</tspan>ICELI</text><path class="tagline" d="M13 27.5H38"/>
      </svg>
      <span>miceli</span>
    </button>
    <div class="meta"><time>00:28</time><svg class="ticks" viewBox="0 0 12 8" role="img" aria-label="Lida"><path d="M0.5 4.5L2.8 6.8L8 1M5 5.8L6 6.8L11.5 1"/></svg></div>
  </article>
  <article class="bubble out">
    <p class="text">Você deseja buscar algum outro contato?<br>[1]<b>Conversar com setor Financeiro</b><br>[2]<b>Conversar com RH</b><br>[3]<b>Conversar com setor Comercial</b><span class="spacer"></span></p>
    <div class="meta"><time>00:28</time><svg class="ticks" viewBox="0 0 12 8" role="img" aria-label="Lida"><path d="M0.5 4.5L2.8 6.8L8 1M5 5.8L6 6.8L11.5 1"/></svg></div>
  </article>
</main>
</body>
</html>
```
FILE: styles.css
```css
* {
  box-sizing: border-box;
}

body {
  margin: 0;
  min-height: 100vh;
  background: #2b2b2b;
  color: #f4f6f6;
  font: 13px/19px "Segoe UI", "Noto Sans", sans-serif;
}

.wallpaper {
  position: fixed;
  inset: 0;
  width: 100%;
  height: 100%;
  fill: none;
  stroke: #393939;
  stroke-width: 4px;
  stroke-linecap: round;
  stroke-linejoin: round;
}

.ring {
  fill: none;
  stroke: #393939;
  stroke-width: 4px;
}

.small,
.medium {
  stroke: none;
}

.small {
  marker: url(#ring-s);
}

.medium {
  marker: url(#ring-m);
}

.digits {
  font: 40px "Liberation Mono", monospace;
  stroke-width: 2px;
}

.chat {
  position: relative;
  display: flex;
  flex-direction: column;
  align-items: flex-start;
  gap: 3px;
  padding: 1px 7px 5px 22px;
}

.bubble {
  position: relative;
  display: grid;
  max-width: 80%;
  padding: 7px 21px 10px 8px;
  border-radius: 6px;
}

.in {
  background: #353535;
  box-shadow: inset 0 1px #3c3c3c;
}

.out {
  align-self: flex-end;
  background: #005e4b;
  box-shadow: inset 0 1px #126a58;
}

.turn {
  margin-top: 9px;
}

.tail::before {
  content: "";
  position: absolute;
  top: 0;
  width: 13px;
  height: 10px;
  background: inherit;
  box-shadow: inherit;
}

.in.tail::before {
  left: -6px;
  clip-path: polygon(0 0, 100% 0, 100% 100%, 6px 8px);
}

.out.tail::before {
  right: -7px;
  clip-path: polygon(0 0, 100% 0, 6px 9px, 0 100%);
}

.text {
  grid-area: 1 / 1;
  margin: 0;
}

.text b {
  font-weight: 600;
}

.spacer {
  display: inline-block;
  width: 34px;
}

.out .spacer {
  width: 52px;
}

.meta {
  grid-area: 1 / 1;
  place-self: end;
  display: flex;
  align-items: center;
  gap: 3px;
  margin: 0 -14px -5px 0;
  color: #a3a3a3;
  font-size: 9px;
  line-height: 12px;
}

.out .meta {
  margin-right: -12px;
  color: #8fbab1;
}

.ticks {
  width: 12px;
  height: 8px;
  fill: none;
  stroke: #53bdeb;
  stroke-width: 1.4px;
}

.contact {
  width: 338px;
  padding: 10px 10px 5px 8px;
  gap: 6px;
}

.contact .meta {
  grid-area: auto;
  margin: 0;
}

.card {
  display: flex;
  align-items: center;
  gap: 10px;
  padding: 8px 10px;
  border: 0;
  border-radius: 4px;
  background: #1c6b5a;
  box-shadow: 0 1px 3px #004c3d;
  color: inherit;
  font: inherit;
  text-align: left;
}

.avatar {
  width: 40px;
  height: 40px;
  stroke: none;
}

.brand {
  fill: #777;
  font: 10px "Liberation Serif", serif;
}

.initial {
  font-size: 14px;
}

.tagline {
  stroke: #ccc;
  stroke-dasharray: 2 1;
}
```
